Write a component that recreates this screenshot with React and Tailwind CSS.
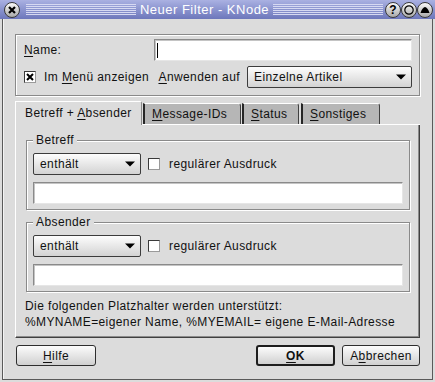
import React from "react";

function U({ children }) {
  return <span className="underline underline-offset-2 decoration-1">{children}</span>;
}

function TitleBtn({ children }) {
  return (
    <div className="w-[16px] h-[16px] rounded-full border border-[#3a3a3a] bg-linear-to-b from-[#fafafa] to-[#a9a9a9] flex items-center justify-center">
      {children}
    </div>
  );
}

function Stripes() {
  return (
    <div className="flex-1 h-[11px] bg-[image:repeating-linear-gradient(to_bottom,#d6d9f2_0px,#d6d9f2_1px,transparent_1px,transparent_2px)]" />
  );
}

function Combo({ text, className }) {
  return (
    <div
      className={
        "flex items-center h-[22px] border border-[#3c3c3c] rounded-[2px] bg-linear-to-b from-[#fdfdfd] to-[#d3d3d3] pl-[6px] pr-[5px] " +
        className
      }
    >
      <span className="flex-1 leading-none">{text}</span>
      <svg width="10" height="6" viewBox="0 0 10 6">
        <path d="M0 0.5H10L5 5.5Z" fill="#000" />
      </svg>
    </div>
  );
}

function Check({ checked }) {
  return (
    <div className="w-[12px] h-[12px] bg-white border border-t-[#3a3a3a] border-l-[#3a3a3a] border-b-[#9a9a9a] border-r-[#9a9a9a] flex items-center justify-center">
      {checked && (
        <svg width="8" height="8" viewBox="0 0 8 8">
          <path d="M1 1L7 7M7 1L1 7" stroke="#000" strokeWidth="2" />
        </svg>
      )}
    </div>
  );
}

function Input({ className, cursor }) {
  return (
    <div
      className={
        "h-[22px] bg-white border border-t-[#8a8a8a] border-l-[#8a8a8a] border-b-[#e6e6e6] border-r-[#e6e6e6] shadow-[inset_1px_1px_0_#c4c4c4] flex items-center " +
        className
      }
    >
      {cursor && <div className="ml-[2px] w-px h-[15px] bg-black" />}
    </div>
  );
}

function Group({ title }) {
  return (
    <fieldset className="border border-[#8a8a8a] shadow-[inset_1px_1px_0_#fff,1px_1px_0_#fff] pl-[6px] pr-[6px] pt-[6px] pb-[5px]">
      <legend className="px-[3px] leading-[14px] bg-[#dcdcdc]">{title}</legend>
      <div className="flex items-center">
        <Combo text="enthält" className="w-[108px]" />
        <div className="ml-[7px]">
          <Check />
        </div>
        <span className="ml-[9px]">regulärer Ausdruck</span>
      </div>
      <Input className="mt-[7px]" />
    </fieldset>
  );
}

function Button({ children, className }) {
  return (
    <div
      className={
        "h-[21px] flex items-center justify-center rounded-[3px] bg-linear-to-b from-[#fcfcfc] to-[#d0d0d0] " +
        className
      }
    >
      {children}
    </div>
  );
}

export default function App() {
  return (
    <div className="w-[435px] h-[382px] bg-[#dcdcdc] overflow-hidden flex flex-col font-['Liberation_Sans',Arial,sans-serif] text-[12px] tracking-[0.4px] text-[#111] leading-[14px]">
      {/* Title bar */}
      <div className="h-[19px] shrink-0 bg-linear-to-b from-[#aab1e2] to-[#6d77bb] flex items-center pl-[4px] pr-[2px]">
        <TitleBtn>
          <svg width="8" height="8" viewBox="0 0 8 8">
            <path d="M1 1L7 7M7 1L1 7" stroke="#000" strokeWidth="2.2" />
          </svg>
        </TitleBtn>
        <div className="w-[6px]" />
        <Stripes />
        <span className="px-[4px] text-white text-[13px] tracking-[0.5px] leading-none">Neuer Filter - KNode</span>
        <Stripes />
        <div className="w-[2px]" />
        <TitleBtn>
          <span className="font-bold text-[12px] tracking-normal leading-none text-black">?</span>
        </TitleBtn>
        <TitleBtn>
          <svg width="10" height="10" viewBox="0 0 10 10">
            <circle cx="5" cy="5" r="4.2" fill="none" stroke="#000" strokeWidth="1.2" />
          </svg>
        </TitleBtn>
        <TitleBtn>
          <svg width="10" height="8" viewBox="0 0 10 8">
            <path d="M0.5 7C1.5 3.5 3.5 1 5 1C6.5 1 8.5 3.5 9.5 7Z" fill="#000" />
          </svg>
        </TitleBtn>
      </div>

      {/* Body */}
      <div className="flex-1 mx-[2px] mb-[2px] border-x border-b border-[#5a5a5a] shadow-[inset_1px_0_0_#f4f4f4] px-[12px] flex flex-col">
        {/* Name frame */}
        <div className="mt-[15px] border border-[#8a8a8a] shadow-[inset_1px_1px_0_#fff,1px_1px_0_#fff] pl-[8px] pr-[7px] pt-[4px] pb-[7px]">
          <div className="flex items-center h-[22px]">
            <span>
              <U>N</U>ame:
            </span>
            <div className="flex-1" />
            <Input className="w-[258px]" cursor />
          </div>
          <div className="flex items-center h-[22px] mt-[5px]">
            <Check checked />
            <span className="ml-[8px]">
              Im <U>M</U>enü anzeigen
            </span>
            <div className="flex-1" />
            <span>
              <U>A</U>nwenden auf
            </span>
            <Combo text="Einzelne Artikel" className="w-[165px] ml-[7px]" />
          </div>
        </div>

        {/* Tabs */}
        <div className="mt-[5px] flex items-end h-[24px]">
          <div className="h-[24px] w-[127px] border-l border-t border-white border-r border-r-[#8a8a8a] rounded-tr-[2px] pl-[9px] pt-[4px]">
            Betreff + <U>A</U>bsender
          </div>
          <div className="flex-1 flex items-end gap-[1px] border-b border-white pl-px">
            <div className="w-[98px] h-[21px] bg-[#b6b6b6] border-t border-t-white border-l-2 border-l-[#262626] border-r border-r-[#404040] rounded-tr-[3px] pl-[7px] pt-[3px]">
              <U>M</U>essage-IDs
            </div>
            <div className="w-[57px] h-[21px] bg-[#b6b6b6] border-t border-t-white border-l-2 border-l-[#262626] border-r border-r-[#404040] rounded-tr-[3px] pl-[7px] pt-[3px]">
              <U>S</U>tatus
            </div>
            <div className="w-[79px] h-[21px] ml-px bg-[#b6b6b6] border-t border-t-white border-l-2 border-l-[#262626] border-r border-r-[#404040] rounded-tr-[3px] pl-[7px] pt-[3px]">
              <U>S</U>onstiges
            </div>
          </div>
        </div>

        {/* Panel */}
        <div className="h-[213px] border-l border-l-white border-r border-b border-r-[#404040] border-b-[#404040] shadow-[inset_-1px_-1px_0_#8c8c8c] pl-[10px] pr-[9px] pt-[8px] flex flex-col">
          <Group title="Betreff" />
          <div className="h-[5px]" />
          <Group title="Absender" />
          <div className="mt-[6px] leading-[16px] -ml-px">
            <div>Die folgenden Platzhalter werden unterstützt:</div>
            <div>%MYNAME=eigener Name, %MYEMAIL= eigene E-Mail-Adresse</div>
          </div>
        </div>

        {/* Buttons */}
        <div className="mt-[7px] flex">
          <Button className="w-[80px] ml-px border border-[#2e2e2e]">
            <U>H</U>ilfe
          </Button>
          <div className="flex-1" />
          <Button className="w-[79px] border-2 border-[#1e1e1e] font-bold">
            <U>O</U>K
          </Button>
          <Button className="w-[78px] ml-[7px] border border-[#2e2e2e]">
            A<U>b</U>brechen
          </Button>
        </div>
      </div>
    </div>
  );
}
